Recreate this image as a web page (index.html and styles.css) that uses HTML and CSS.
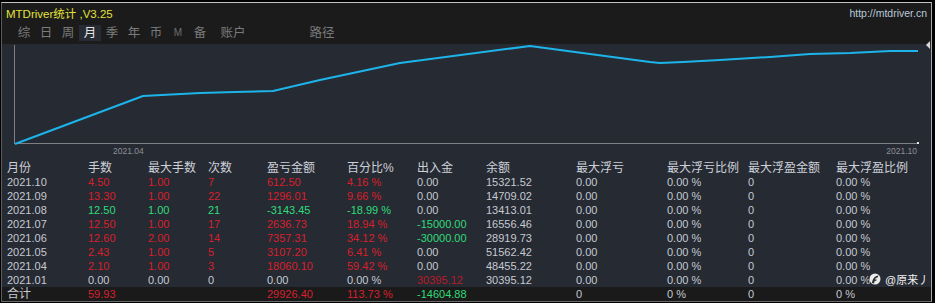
FILE: index.html
```html
<!DOCTYPE html>
<html lang="zh">
<head>
    <meta charset="UTF-8">
    <title>MTDriver统计</title>
    <link rel="stylesheet" href="styles.css">
</head>
<body>
    <div class="frame">
        <div class="head">
            <div class="title-bar">
                <span class="title">MTDriver统计 ,V3.25</span>
                <span class="site">http://mtdriver.cn</span>
            </div>
            <div class="tabs">
                <span class="tab">综</span>
                <span class="tab">日</span>
                <span class="tab">周</span>
                <span class="tab on">月</span>
                <span class="tab">季</span>
                <span class="tab">年</span>
                <span class="tab">币</span>
                <span class="tab small">M</span>
                <span class="tab">备</span>
                <span class="tab wide">账户</span>
                <span class="tab wide path">路径</span>
            </div>
        </div>

        <div class="chart">
            <svg width="929" height="117" viewBox="0 0 929 117">
                <line x1="12.5" y1="1" x2="12.5" y2="99.5" stroke="#7d7f84" stroke-width="1"/>
                <line x1="12" y1="99.5" x2="916" y2="99.5" stroke="#7d7f84" stroke-width="1"/>
                <rect x="915" y="98" width="2" height="2" fill="#e8e8e8"/>
                <polyline fill="none" stroke="#1db4ea" stroke-width="2" stroke-linejoin="round"
                    points="13,100 141,52 198,49 233,48 271,47 318,36 398,19 528,2 648,18 658,19 681,18 718,16 768,13 808,10 848,9 888,7 916,7"/>
                <text x="111" y="110" class="axis-label">2021.04</text>
                <text x="915" y="110" class="axis-label" text-anchor="end">2021.10</text>
                <polygon points="924,1 928,-3 928,5" fill="#d8d8d8"/>
            </svg>
        </div>

        <div class="table">
            <div class="row head-row">
                <span>月份</span><span>手数</span><span>最大手数</span><span>次数</span><span>盈亏金额</span><span>百分比%</span>
                <span>出入金</span><span>余额</span><span>最大浮亏</span><span>最大浮亏比例</span><span>最大浮盈金额</span><span>最大浮盈比例</span>
            </div>
            <div class="row">
                <span>2021.10</span><span class="red">4.50</span><span class="red">1.00</span><span class="red">7</span><span class="red">612.50</span><span class="red">4.16 %</span>
                <span>0.00</span><span>15321.52</span><span>0.00</span><span>0.00 %</span><span>0</span><span>0.00 %</span>
            </div>
            <div class="row">
                <span>2021.09</span><span class="red">13.30</span><span class="red">1.00</span><span class="red">22</span><span class="red">1296.01</span><span class="red">9.66 %</span>
                <span>0.00</span><span>14709.02</span><span>0.00</span><span>0.00 %</span><span>0</span><span>0.00 %</span>
            </div>
            <div class="row">
                <span>2021.08</span><span class="green">12.50</span><span class="green">1.00</span><span class="green">21</span><span class="green">-3143.45</span><span class="green">-18.99 %</span>
                <span>0.00</span><span>13413.01</span><span>0.00</span><span>0.00 %</span><span>0</span><span>0.00 %</span>
            </div>
            <div class="row">
                <span>2021.07</span><span class="red">12.50</span><span class="red">1.00</span><span class="red">17</span><span class="red">2636.73</span><span class="red">18.94 %</span>
                <span class="green">-15000.00</span><span>16556.46</span><span>0.00</span><span>0.00 %</span><span>0</span><span>0.00 %</span>
            </div>
            <div class="row">
                <span>2021.06</span><span class="red">12.60</span><span class="red">2.00</span><span class="red">14</span><span class="red">7357.31</span><span class="red">34.12 %</span>
                <span class="green">-30000.00</span><span>28919.73</span><span>0.00</span><span>0.00 %</span><span>0</span><span>0.00 %</span>
            </div>
            <div class="row">
                <span>2021.05</span><span class="red">2.43</span><span class="red">1.00</span><span class="red">5</span><span class="red">3107.20</span><span class="red">6.41 %</span>
                <span>0.00</span><span>51562.42</span><span>0.00</span><span>0.00 %</span><span>0</span><span>0.00 %</span>
            </div>
            <div class="row">
                <span>2021.04</span><span class="red">2.10</span><span class="red">1.00</span><span class="red">3</span><span class="red">18060.10</span><span class="red">59.42 %</span>
                <span>0.00</span><span>48455.22</span><span>0.00</span><span>0.00 %</span><span>0</span><span>0.00 %</span>
            </div>
            <div class="row">
                <span>2021.01</span><span>0.00</span><span>0.00</span><span>0</span><span>0.00</span><span>0.00 %</span>
                <span class="dark-red">30395.12</span><span>30395.12</span><span>0.00</span><span>0.00 %</span><span>0</span><span>0.00 %</span>
            </div>
            <div class="row total-row">
                <span class="cn">合计</span><span class="red">59.93</span><span></span><span></span><span class="red">29926.40</span><span class="red">113.73 %</span>
                <span class="green">-14604.88</span><span></span><span>0</span><span>0 %</span><span>0</span><span>0 %</span>
            </div>

            <div class="watermark">
                <svg width="12" height="12" viewBox="0 0 12 12">
                    <circle cx="6" cy="6" r="5.5" fill="#ececec"/>
                    <path d="M3 10 C3.5 6 5.5 3.2 9.5 2.6 L8.6 4.6 C7 4.8 6.3 5.6 6 6.6 L7.8 6.4 L7.2 7.8 L5.7 8 C5.4 9 5.2 9.8 5.1 10.6 Z" fill="#2a2d33"/>
                </svg>
                <span>@原来丿</span>
            </div>
        </div>
    </div>
</body>
</html>
```

FILE: styles.css
```css
body {
    margin: 0;
    padding-top: 2px;
    background-color: #000;
    width: 935px;
    height: 303px;
    overflow: hidden;
    font-family: "Liberation Sans", "Noto Sans CJK SC", sans-serif;
}

.frame {
    margin-left: 1px;
    width: 929px;
    border-top: 1px solid #c4c4c4;
    border-left: 1px solid #5c5c5c;
    border-right: 1px solid #a8a8a8;
    border-bottom: 1px solid #6a6a6a;
    background-color: #262a33;
}

.head {
    background-color: #1b1b1b;
}

.title-bar {
    height: 19px;
    display: flex;
    justify-content: space-between;
    align-items: center;
    padding: 0 4px;
}

.title {
    color: #e2e23a;
    font-size: 11.5px;
}

.site {
    color: #b9c8da;
    font-size: 10.5px;
}

.tabs {
    height: 22px;
    display: flex;
    align-items: center;
    padding-left: 11px;
}

.tab {
    width: 22px;
    height: 16px;
    line-height: 16px;
    text-align: center;
    font-size: 12.5px;
    color: #7b7b7b;
}

.tab.on {
    color: #e6e6e6;
    background-color: #272b33;
}

.tab.small {
    font-size: 10px;
    color: #6e6e6e;
}

.tab.wide {
    width: 44px;
}

.tab.path {
    margin-left: 45px;
}

.chart {
    height: 117px;
}

.chart svg {
    display: block;
    overflow: visible;
}

.axis-label {
    font-family: "Liberation Sans", sans-serif;
    font-size: 8.5px;
    fill: #8e9096;
}

.table {
    position: relative;
    padding-left: 5px;
}

.row {
    display: grid;
    grid-template-columns: 81px 60px 60px 59px 80px 70px 69px 90px 91px 81px 88px 1fr;
    height: 14px;
    line-height: 14px;
    font-size: 11px;
    color: #c5c9d1;
    white-space: nowrap;
}

.head-row {
    font-size: 12px;
    color: #cdd1d8;
}

.total-row {
    margin-left: -5px;
    padding-left: 5px;
    background-color: #1a1a1a;
}

.total-row .cn {
    font-size: 12px;
}

.red {
    color: #d6202c;
}

.dark-red {
    color: #b81a28;
}

.green {
    color: #2fdc78;
}

.watermark {
    position: absolute;
    left: 867px;
    top: 110px;
    display: flex;
    align-items: center;
    gap: 4px;
    color: #f0f0f0;
    font-size: 11px;
    white-space: nowrap;
}

.watermark svg {
    display: block;
}
```
